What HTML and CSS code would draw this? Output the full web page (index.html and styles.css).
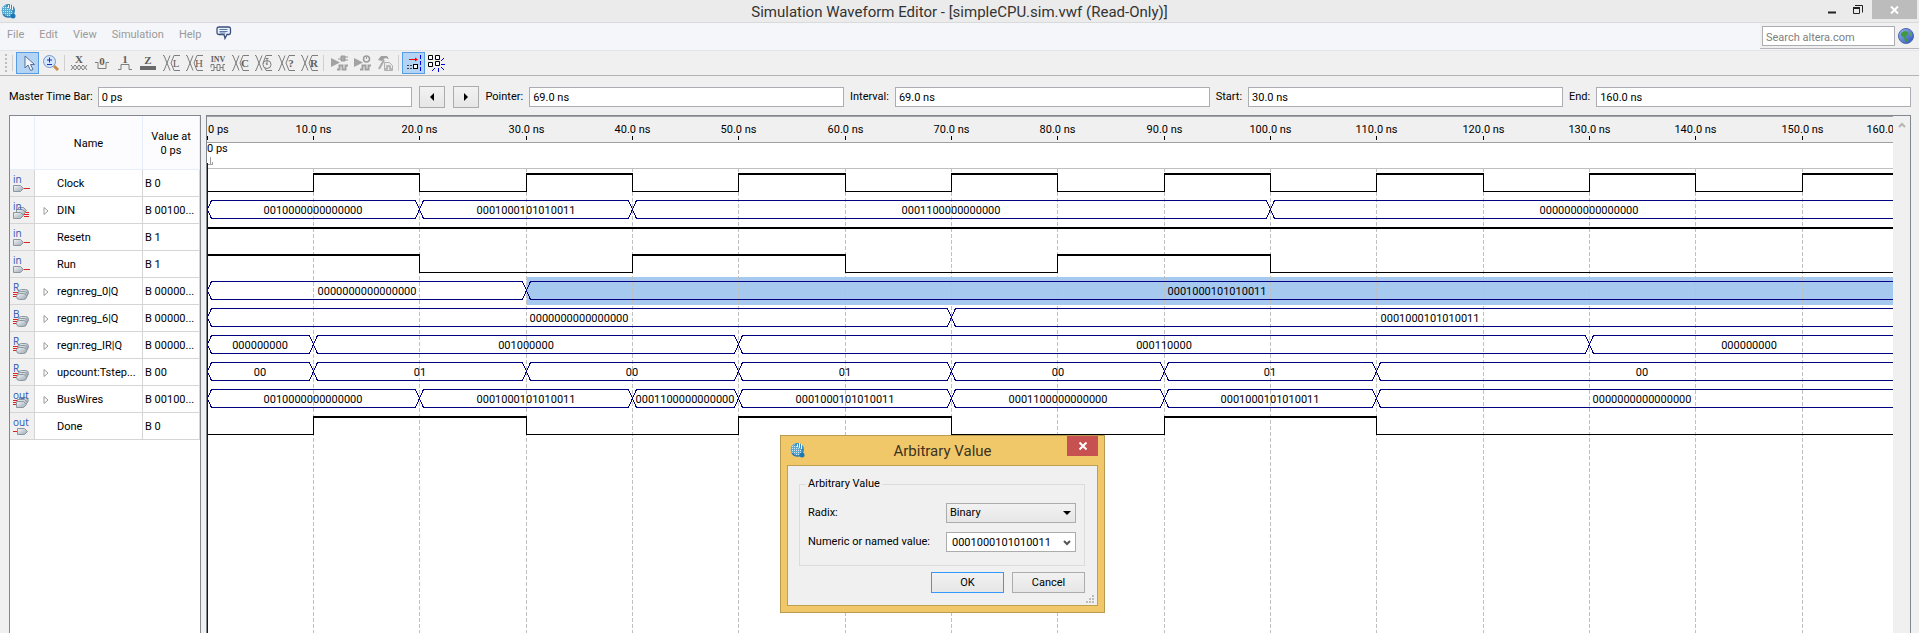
FILE: index.html
```html
<!DOCTYPE html>
<html lang="en">
<head>
<meta charset="utf-8">
<title>Simulation Waveform Editor - [simpleCPU.sim.vwf (Read-Only)]</title>
<link rel="stylesheet" href="styles.css">
</head>
<body>
<svg class="defs" aria-hidden="true">
  <defs>
    <linearGradient id="steel" x1="0" y1="0" x2="1" y2="1"><stop offset="0" stop-color="#f4f7f9"/><stop offset="1" stop-color="#9aa6b0"/></linearGradient>
    <linearGradient id="ocean" x1="0" y1="0" x2="1" y2="1"><stop offset="0" stop-color="#9db9ea"/><stop offset="1" stop-color="#2a50b8"/></linearGradient>
    <pattern id="mesh" width="2" height="2" patternUnits="userSpaceOnUse"><rect width="2" height="2" fill="#5aaad2"/><rect width="1" height="1" fill="#d4e8f2"/></pattern>
    <symbol id="app" viewBox="0 0 16 16">
      <circle cx="7" cy="7.500" r="6.500" fill="url(#mesh)"/>
      <path d="M8 1a6.500 6.500 0 0 1 6 6.500c0 2-1 4-2 4C12 7 9 4 4 3 5 2 6 1 8 1z" fill="#3a8cc0"/>
      <path d="M7.500 2v3M9.500 1v5M11.500 2v5" stroke="#eef6fa" stroke-width="1"/>
      <path d="M2 11c2 3 6 4 9 2" stroke="#2a7ab2" stroke-width="1.500" fill="none"/>
      <circle cx="12" cy="13" r="2.500" fill="#1b78b5"/>
    </symbol>
    <symbol id="pin-in" viewBox="0 0 18 18">
      <text x="0" y="8" class="pin-text">in</text>
      <path d="M11 13.500h6" stroke="#e0201c"/>
      <path d="M.5 10.500h7l3 3-3 3h-7z" fill="url(#steel)" stroke="#8a96a0"/>
    </symbol>
    <symbol id="pin-out" viewBox="0 0 18 18">
      <text x="0" y="8" class="pin-text">out</text>
      <path d="M0 13.500h5" stroke="#e0201c"/>
      <path d="M4.500 10.500h7l3 3-3 3h-7z" fill="url(#steel)" stroke="#8a96a0"/>
    </symbol>
    <symbol id="bus-in" viewBox="0 0 18 18">
      <path d="M11 10.500h5M11 12.500h5M11 14.500h5" stroke="#e0201c"/>
      <path d="M5.500 5.500h5l3 3-3 3h-5z" fill="url(#steel)" stroke="#8a96a0"/>
      <path d="M3.500 7.500h6l3 3-3 3h-6z" fill="url(#steel)" stroke="#8a96a0"/>
      <path d="M.5 10.500h7l3 3-3 3h-7z" fill="url(#steel)" stroke="#8a96a0"/>
      <text x="0" y="8" class="pin-text">in</text>
    </symbol>
    <symbol id="bus-out" viewBox="0 0 18 18">
      <path d="M0 9.500h5M0 11.500h5M0 13.500h5" stroke="#e0201c"/>
      <path d="M6.500 6.500h7l2 3-2 3h-7z" fill="url(#steel)" stroke="#8a96a0"/>
      <path d="M4.500 8.500h7l3 3-3 3h-7z" fill="url(#steel)" stroke="#8a96a0"/>
      <path d="M3.500 10.500h7l3 3-3 3h-7z" fill="url(#steel)" stroke="#8a96a0"/>
      <text x="0" y="8" class="pin-text">out</text>
    </symbol>
    <symbol id="reg" viewBox="0 0 18 18">
      <path d="M0 9.500h5M0 11.500h5M0 13.500h5" stroke="#e0201c"/>
      <rect x="5.500" y="6.500" width="10" height="6" rx="3" fill="url(#steel)" stroke="#8a96a0"/>
      <rect x="4.500" y="8.500" width="10" height="6" rx="3" fill="url(#steel)" stroke="#8a96a0"/>
      <rect x="3.500" y="10.500" width="10" height="6" rx="3" fill="url(#steel)" stroke="#8a96a0"/>
    </symbol>
    <symbol id="cross-half" viewBox="0 0 18 18"><path d="M0 1.500h1l6 15M0 16.500h1l6-15M17 1.500h-6l-3 7.500 3 7.500h6" fill="none" stroke="#7d7d7d"/></symbol>
    <symbol id="waves" viewBox="0 0 18 18"><path d="M1 4v9l9-4.500z" fill="#a3a3a3"/><path d="M7 15.500h2.500v-4h3v4h3v-4H18" fill="none" stroke="#a0a0a0" stroke-width="2"/></symbol>
  </defs>
</svg>

<header class="titlebar">
  <svg class="app-icon" width="16" height="16"><use href="#app"/></svg>
  <h1 class="title">Simulation Waveform Editor - [simpleCPU.sim.vwf (Read-Only)]</h1>
  <div class="window-buttons">
    <button class="win-btn" aria-label="Minimize"><svg width="10" height="16"><path d="M1 11.500h8" stroke="#222" stroke-width="2"/></svg></button>
    <button class="win-btn" aria-label="Restore"><svg width="12" height="16"><path d="M3 4.500h7.500v7" fill="none" stroke="#222"/><path d="M1.500 6.500h6v6h-6z" fill="none" stroke="#222"/><path d="M1 7h7" stroke="#222" stroke-width="2"/></svg></button>
    <button class="win-btn win-close" aria-label="Close"><svg width="9" height="8"><path d="M1 .5l7 7M8 .5l-7 7" stroke="#fff" stroke-width="2"/></svg></button>
  </div>
</header>

<div class="menubar">
  <nav class="menu" aria-label="Main menu">
    <a href="#file">File</a><a href="#edit">Edit</a><a href="#view">View</a><a href="#simulation">Simulation</a><a href="#help">Help</a>
    <button class="feedback" aria-label="Feedback"><svg width="15" height="14"><path d="M3 1h10q1.500 0 1.500 2v3.500q0 2-1.500 2h-2L9 12.500l-1-4H3Q1 8.500 1 6.500V3q0-2 2-2z" fill="#e9f0fa" stroke="#3a5078" stroke-width="1.300"/><path d="M3.500 3.500h8M3.500 5.500h8M3.500 7h6" stroke="#5a78a8"/></svg></button>
  </nav>
  <form class="search">
    <input class="search-box" type="search" aria-label="Search altera.com" placeholder="Search altera.com">
    <button class="globe" type="button" aria-label="Go"><svg width="16" height="16"><circle cx="8" cy="8" r="7.500" fill="url(#ocean)" stroke="#4a68b0"/><path d="M3 5l4-2 3 1v3l-2 1v2l2 1-1 3-2-1-1-4-3-1z" fill="#3f9b3d"/><path d="M11 3l3 3v3l-2-2z" fill="#5aa650"/></svg></button>
  </form>
</div>

<div class="toolbar" role="toolbar" aria-label="Waveform tools">
  <svg class="grip" width="4" height="20"><path d="M2 1v18" stroke="#bdbdbd" stroke-width="2" stroke-dasharray="2 2"/></svg>
  <span class="sep"></span>
  <button class="tool active" aria-label="Selection tool"><svg width="18" height="18"><path d="M6 2v12l3-3 2.500 5.500 2.500-1-2.500-5h4z" fill="#f2f6fb" stroke="#5b6f96"/></svg></button>
  <button class="tool" aria-label="Zoom tool"><svg width="18" height="18"><path d="M12 12l4 4" stroke="#c98b48" stroke-width="3"/><circle cx="7.500" cy="7.500" r="6" fill="#d3e6fb" stroke="#7898c8"/><path d="M5 6h5M7.500 3.500v5M5 10.500h5" stroke="#1c2fae"/></svg></button>
  <span class="sep"></span>
  <button class="tool" aria-label="Forcing unknown"><svg width="18" height="18"><text x="8" y="9" class="glyph">X</text><path d="M0 11l4 5 4-5 4 5 4-5M0 16l4-5 4 5 4-5 4 5" fill="none" stroke="#7d7d7d"/></svg></button>
  <button class="tool" aria-label="Forcing low"><svg width="18" height="18"><text x="8" y="11" class="glyph">0</text><path d="M1 8.500h3v6h8v-6h3" fill="none" stroke="#7d7d7d"/></svg></button>
  <button class="tool" aria-label="Forcing high"><svg width="18" height="18"><text x="8" y="9" class="glyph">1</text><path d="M1 15.500h3v-5h8v5h3" fill="none" stroke="#7d7d7d"/></svg></button>
  <button class="tool" aria-label="High impedance"><svg width="18" height="18"><text x="8" y="10" class="glyph">Z</text><path d="M0 14h16" stroke="#6a6a6a" stroke-width="4"/></svg></button>
  <button class="tool" aria-label="Weak low"><svg width="18" height="18"><use href="#cross-half"/><text x="13" y="13" class="glyph thin">L</text></svg></button>
  <button class="tool" aria-label="Weak high"><svg width="18" height="18"><use href="#cross-half"/><text x="13" y="13" class="glyph thin">H</text></svg></button>
  <button class="tool" aria-label="Invert"><svg width="18" height="18"><text x="9" y="8" class="glyph small">INV</text><path d="M2 13.500V10.500h3v3h3v-3h3v3h3v-3h2M2 16.500h3v-3M8 13.500v3h3v-3M14 13v3.500h2" fill="none" stroke="#7d7d7d"/></svg></button>
  <button class="tool" aria-label="Count value"><svg width="18" height="18"><use href="#cross-half"/><text x="13" y="13" class="glyph">C</text></svg></button>
  <button class="tool" aria-label="Overwrite clock"><svg width="18" height="18"><use href="#cross-half"/><circle cx="12" cy="10.500" r="4" fill="#f0f0f0" stroke="#7d7d7d"/><path d="M12 7v4M10.500 4.500h3M12 4v2M11 9l1 2" fill="none" stroke="#7d7d7d"/></svg></button>
  <button class="tool" aria-label="Arbitrary value"><svg width="18" height="18"><use href="#cross-half"/><text x="13" y="13" class="glyph">?</text></svg></button>
  <button class="tool" aria-label="Random values"><svg width="18" height="18"><use href="#cross-half"/><text x="13" y="13" class="glyph">R</text></svg></button>
  <span class="sep"></span>
  <button class="tool" aria-label="Run functional simulation"><svg width="18" height="18"><use href="#waves"/><path d="M8 5h3M11 2h4v5h-4zM15 3h3M15 6h3" fill="#aaa" stroke="#9b9b9b"/></svg></button>
  <button class="tool" aria-label="Run timing simulation"><svg width="18" height="18"><use href="#waves"/><circle cx="13.500" cy="5" r="3" fill="#eee" stroke="#9b9b9b" stroke-width="1.500"/><path d="M13.500 3v2" stroke="#9b9b9b"/></svg></button>
  <button class="tool" aria-label="Generate testbench"><svg width="18" height="18"><path d="M3 15l5-9" stroke="#aaa" stroke-width="2"/><path d="M2 6l3-4h6l2 3-4-1-3 3z" fill="#a0a0a0"/><path d="M8.500 8.500h5l3 3v5h-8z" fill="#ececec" stroke="#b0b0b0"/><path d="M9 15h2v-3h3v3h2" fill="none" stroke="#a8a8a8" stroke-width="1.500"/></svg></button>
  <span class="sep"></span>
  <button class="tool active" aria-label="Snap to grid"><svg width="18" height="18"><path d="M4 5.500h8" stroke="#f00"/><path d="M10 3.500l3 2-3 2z" fill="#f00"/><path d="M2 11.500h7M2 14.500h7" stroke="#444" stroke-dasharray="2 1"/><rect x="8.500" y="10.500" width="4" height="4" fill="#fff" stroke="#000"/><path d="M15.500 1v16" stroke="#0000e0" stroke-dasharray="4 2"/></svg></button>
  <button class="tool" aria-label="Snap to transition"><svg width="18" height="18"><path d="M.5 1.500h4v4h-4zM7.500 1.500h4v4h-4zM.5 8.500h4v4h-4z" fill="#fff" stroke="#000"/><path d="M7.500 7.500h4v4h-4z" fill="#fff" stroke="#000"/><path d="M13 7l3-3M13 10.500h4M13 13l3 3M10.500 14v4M7 14l-3 3" stroke="#0000e0"/></svg></button>
</div>

<form class="timebar">
  <label class="field field-master"><span>Master Time Bar:</span><input value="0 ps"></label>
  <button class="step step-first" type="button" aria-label="Previous transition"><svg width="6" height="8"><path d="M5 0v8L1 4z"/></svg></button>
  <button class="step" type="button" aria-label="Next transition"><svg width="6" height="8"><path d="M1 0v8l4-4z"/></svg></button>
  <label class="field"><span>Pointer:</span><input value="69.0 ns"></label>
  <label class="field"><span>Interval:</span><input value="69.0 ns"></label>
  <label class="field"><span>Start:</span><input value="30.0 ns"></label>
  <label class="field"><span>End:</span><input value="160.0 ns"></label>
</form>

<main class="editor">
  <section class="names" aria-label="Signals">
    <table class="signals">
      <thead><tr><th class="col-icon"></th><th class="col-name">Name</th><th class="col-value">Value at<br>0 ps</th></tr></thead>
      <tbody id="signal-rows"></tbody>
    </table>
  </section>
  <section class="waves" aria-label="Waveforms">
    <div class="wave-area">
      <svg class="ruler" id="ruler" height="52"></svg>
      <svg class="plot" id="plot"></svg>
    </div>
    <div class="scroll-track"><svg width="8" height="6"><path d="M1 5l3-3 3 3" fill="none" stroke="#b5b5b5" stroke-width="2"/></svg></div>
  </section>
</main>

<div class="dialog" role="dialog" aria-labelledby="dialog-title">
  <div class="dialog-head">
    <svg class="dialog-icon" width="16" height="16"><use href="#app"/></svg>
    <h2 class="dialog-title" id="dialog-title">Arbitrary Value</h2>
    <button class="dialog-close" aria-label="Close dialog"><svg width="8" height="8"><path d="M.5 .5l7 7M7.500 .5l-7 7" stroke="#fff" stroke-width="2"/></svg></button>
  </div>
  <form class="dialog-body">
    <fieldset class="group">
      <legend>Arbitrary Value</legend>
      <label for="radix">Radix:</label>
      <div class="combo">
        <select id="radix" class="combo-select"><option>Binary</option></select>
        <svg class="combo-arrow" width="8" height="4"><path d="M0 0h8L4 4z"/></svg>
      </div>
      <label for="value">Numeric or named value:</label>
      <div class="combo">
        <input id="value" class="combo-input" value="0001000101010011">
        <svg class="combo-arrow" width="8" height="6"><path d="M1 1l3 3 3-3" fill="none" stroke="#555" stroke-width="2"/></svg>
      </div>
    </fieldset>
    <div class="actions">
      <button class="btn btn-default" type="button">OK</button>
      <button class="btn" type="button">Cancel</button>
    </div>
    <svg class="size-grip" width="8" height="8"><path d="M6 0h2v2H6zM3 3h2v2H3zM6 3h2v2H6zM0 6h2v2H0zM3 6h2v2H3zM6 6h2v2H6z" fill="#bdbdbd"/></svg>
  </form>
</div>
<script src="waves.js"></script>
</body>
</html>
```
FILE: styles.css
```css
* { box-sizing: border-box; }
body {
  margin: 0;
  height: 100vh;
  display: flex;
  flex-direction: column;
  overflow: hidden;
  background: #f0f0f0;
  color: #000;
  font: 11px/14px Roboto, "Noto Sans", sans-serif;
}
button, input, select { font: inherit; color: inherit; margin: 0; border-radius: 0; }
button { padding: 0; border: 0; background: none; display: flex; align-items: center; justify-content: center; }
svg { display: block; overflow: visible; }
symbol { overflow: visible; }
.defs { position: absolute; width: 0; height: 0; }

.titlebar { display: grid; grid-template-columns: 1fr auto 1fr; flex: none; height: 23px; background: #ebebeb; border-bottom: 1px solid #d9dadb; }
.app-icon { margin: 3px 0 0 1px; }
.title { margin: 0; font-size: 15px; line-height: 24px; font-weight: 400; color: #333; }
.window-buttons { display: flex; justify-content: flex-end; align-items: flex-start; padding-right: 2px; }
.win-btn { width: 26px; height: 18px; }
.win-close { width: 45px; height: 19px; margin-left: 1px; background: #bcbcbc; }

.menubar { display: flex; justify-content: space-between; flex: none; height: 28px; background: #f5f6f9; border-bottom: 1px solid #e3e4e6; }
.menu { display: flex; align-items: flex-start; gap: 15px; padding: 3px 7px; }
.menu a { color: #9a9a9a; text-decoration: none; line-height: 15px; padding-top: 1px; }
.search { display: flex; align-items: flex-start; gap: 3px; height: 26px; padding: 3px 5px 0 2px; border-bottom: 1px solid #b5b5b5; background: #f0f0f0; }
.search-box { width: 133px; height: 20px; padding: 2px 3px 0; border: 1px solid #abadb3; background: #fff; appearance: none; outline: 0; }
.search-box::placeholder { color: #808080; opacity: 1; }
.globe { height: 20px; }

.toolbar { display: flex; align-items: center; flex: none; height: 25px; padding: 0 4px 1px; border-bottom: 1px solid #b4b4b4; }
.grip { margin-right: 3px; }
.sep { width: 1px; height: 16px; margin: 0 3px 0 2px; background: #cfcfcf; }
.grip + .sep { margin-left: 1px; }
.tool { width: 23px; height: 22px; }
.tool.active { background: #b3d4f4; border: 1px solid #569de5; }
.glyph { font: bold 11px "Liberation Serif", serif; fill: #5f5f5f; text-anchor: middle; }
.glyph.thin { font-weight: 400; }
.glyph.small { font-size: 8px; }
.pin-text { font: 10px "Open Sans", sans-serif; fill: #2f55b0; }

.timebar { display: flex; flex: none; align-items: center; gap: 6px; height: 39px; padding: 2px 8px 0 9px; }
.field { flex: 1 0 auto; display: flex; align-items: center; gap: 6px; }
.field input { flex: 1; min-width: 0; height: 20px; padding: 1px 3px 0; border: 1px solid #abadb3; background: #fff; outline: 0; }
.field-master { gap: 5px; padding-right: 1px; }
.step { width: 26px; height: 22px; border: 1px solid #acacac; background: linear-gradient(#f2f2f2, #e6e6e6); }
.step + .step { margin-left: 2px; }

.editor { flex: 1; min-height: 0; display: flex; gap: 5px; padding: 0 8px 0 9px; }
.names { flex: none; width: 192px; background: #fff; border: 1px solid #828790; border-bottom: 0; overflow: hidden; }
.signals { width: 190px; table-layout: fixed; border-collapse: separate; border-spacing: 0; }
.signals th { height: 54px; padding: 2px 0 0; font-weight: 400; background: #fcfcfe; border: solid #e5effb; border-width: 0 1px 1px 0; }
.col-icon { width: 25px; }
.col-name { width: 108px; }
.col-value { width: 57px; }
.signals td { height: 27px; padding: 2px 2px 0; border: solid #d5d5d5; border-width: 0 1px 1px 0; white-space: nowrap; }
.signals .cell-icon { padding-left: 3px; background: #f0f0f0; }
.signal { display: flex; align-items: center; gap: 8px; padding-left: 6px; }
.expander { flex: none; width: 6px; height: 8px; }

.waves { flex: 1; min-width: 0; display: flex; border: 1px solid #828790; border-bottom: 0; }
.wave-area { flex: 1; min-width: 0; display: flex; flex-direction: column; background: #fff; overflow: hidden; }
.ruler { flex: none; width: 100%; }
.plot { flex: 1; width: 100%; min-height: 0; }
.scroll-track { flex: none; width: 17px; padding: 6px 0 0 5px; background: #f0f0f0; }
.wave-text { fill: #000; text-anchor: middle; }
.line { fill: none; shape-rendering: crispEdges; stroke: #000; }
.bus { stroke: #000080; }
.grid { stroke: #c0c0c0; stroke-dasharray: 4 2; }
.master { stroke: #0000c8; }

.dialog { position: absolute; left: 780px; top: 435px; width: 325px; padding: 0 6px 6px; background: #f0c869; border: 1px solid #b89a50; }
.dialog-head { display: grid; grid-template-columns: 1fr auto 1fr; height: 29px; }
.dialog-icon { margin: 6px 0 0 3px; }
.dialog-title { margin: 0; padding-top: 5px; font-size: 15px; line-height: 20px; font-weight: 400; color: #3c3320; }
.dialog-close { justify-self: end; width: 31px; height: 20px; background: #c75050; }
.dialog-body { position: relative; display: flex; flex-direction: column; gap: 6px; padding: 11px 12px 12px 11px; border: 1px solid #c0a050; background: #f0f0f0; }
.group { display: grid; grid-template-columns: 1fr 130px; align-items: center; row-gap: 9px; margin: 0; padding: 12px 8px 13px 8px; border: 1px solid #dcdcdc; }
.group legend { padding: 0 2px; margin-left: -2px; }
.combo { position: relative; }
.combo-select, .combo-input { display: block; width: 100%; height: 20px; border: 1px solid #acacac; outline: 0; appearance: none; }
.combo-select { padding: 0 3px; background: linear-gradient(#f2f2f2, #e6e6e6); }
.combo-input { padding: 1px 5px 0; background: #fff; }
.combo-arrow { position: absolute; right: 5px; top: 8px; pointer-events: none; }
.actions { display: flex; justify-content: flex-end; gap: 8px; }
.btn { width: 73px; height: 21px; border: 1px solid #acacac; background: linear-gradient(#f2f2f2, #e6e6e6); }
.btn-default { border-color: #3399ff; }
.size-grip { position: absolute; right: 3px; bottom: 2px; }
```
FILE: waves.js
```javascript
const PX_PER_NS = 10.635;
const ROW = 27;
const END = 160;
const VALUE_CHARS = 5;

const signals = [
  { name: "Clock", value: "0", icon: "pin-in", level: [0, 1, 0, 1, 0, 1, 0, 1, 0, 1, 0, 1, 0, 1, 0, 1].map((v, i) => [i * 10, v]) },
  { name: "DIN", value: "0010000000000000", icon: "bus-in", bus: [[0, "0010000000000000"], [20, "0001000101010011"], [40, "0001100000000000"], [100, "0000000000000000"]] },
  { name: "Resetn", value: "1", icon: "pin-in", level: [[0, 1]] },
  { name: "Run", value: "1", icon: "pin-in", level: [[0, 1], [20, 0], [40, 1], [60, 0], [80, 1], [100, 0]] },
  { name: "regn:reg_0|Q", value: "0000000000000000", icon: "reg", letter: "R", selected: 30, bus: [[0, "0000000000000000"], [30, "0001000101010011"]] },
  { name: "regn:reg_6|Q", value: "0000000000000000", icon: "reg", letter: "B", bus: [[0, "0000000000000000"], [70, "0001000101010011"]] },
  { name: "regn:reg_IR|Q", value: "000000000", icon: "reg", letter: "R", bus: [[0, "000000000"], [10, "001000000"], [50, "000110000"], [130, "000000000"]] },
  { name: "upcount:Tstep...", value: "00", icon: "reg", letter: "R", bus: [[0, "00"], [10, "01"], [30, "00"], [50, "01"], [70, "00"], [90, "01"], [110, "00"]] },
  { name: "BusWires", value: "0010000000000000", icon: "bus-out", bus: [[0, "0010000000000000"], [20, "0001000101010011"], [40, "0001100000000000"], [50, "0001000101010011"], [70, "0001100000000000"], [90, "0001000101010011"], [110, "0000000000000000"]] },
  { name: "Done", value: "0", icon: "pin-out", level: [[0, 0], [10, 1], [30, 0], [50, 1], [70, 0], [90, 1], [110, 0]] }
];

const px = ns => Math.floor(ns * PX_PER_NS) + 0.5;
const shorten = v => v.length > VALUE_CHARS ? v.slice(0, VALUE_CHARS) + "..." : v;

/* Signal list */
document.getElementById("signal-rows").innerHTML = signals.map(s => {
  const letter = s.letter ? `<text x="0" y="8" class="pin-text">${s.letter}</text>` : "";
  const arrow = s.bus ? '<path d="M1 .5v7l4-3.500z" fill="none" stroke="#9a9a9a"/>' : "";
  return `<tr><td class="cell-icon"><svg width="18" height="18"><use href="#${s.icon}"/>${letter}</svg></td>
    <td><div class="signal"><svg class="expander">${arrow}</svg><span>${s.name}</span></div></td>
    <td>B ${shorten(s.value)}</td></tr>`;
}).join("");

/* Time ruler */
let ruler = '<rect width="100%" height="26" fill="#f0f0f0"/><path class="line" d="M0 .5h4000M0 26.500h4000" style="stroke:#a0a0a0"/>';
for (let t = 0; t <= END; t += 10) {
  const label = t ? t.toFixed(1) + " ns" : "0 ps";
  const x = t === 0 ? 1 : px(t);
  const anchor = t === 0 ? "start" : t === END ? "end" : "middle";
  ruler += `<text x="${x}" y="17" text-anchor="${anchor}">${label}</text><path class="line" d="M${px(t)} 20v4"/>`;
}
ruler += '<text x="0" y="36">0 ps</text><path class="line" d="M1 48.500h4v-3M3.500 48v-7" style="stroke:#a0a0a0"/><path class="line master" d="M.5 47v6"/>';
document.getElementById("ruler").innerHTML = ruler;

/* Waveforms */
let plot = "";
signals.forEach((s, i) => {
  if (s.selected) plot += `<rect x="${px(s.selected)}" y="${i * ROW + 1}" width="4000" height="28" fill="#a6c9f0"/>`;
});
for (let t = 10; t < END; t += 10) plot += `<path class="line grid" d="M${px(t)} 0v2000"/>`;
signals.forEach((s, i) => {
  const top = i * ROW + 5.5, bottom = top + 18;
  const steps = s.level || s.bus;
  steps.forEach(([t, v], k) => {
    const last = k === steps.length - 1;
    const a = px(t), b = px(last ? END : steps[k + 1][0]);
    if (s.level) {
      const y = v ? top + 0.5 : bottom;
      plot += `<path class="line" d="M${a - 0.5} ${y}H${b + 0.5}" stroke-width="${v ? 2 : 1}"/>`;
      if (k) plot += `<path class="line" d="M${a} ${top}V${bottom}"/>`;
    } else {
      const mid = (top + bottom) / 2;
      plot += `<path class="line bus" d="M${b} ${mid}L${b - 4} ${top}H${a + 4}L${a} ${mid}L${a + 4} ${bottom}H${b - 4}z"/>`;
      plot += `<text class="wave-text" x="${Math.floor((a + b) / 2)}" y="${top + 13.5}">${v}</text>`;
    }
  });
});
plot += '<path class="line" d="M0 .5h4000" style="stroke:#c0c0c0"/><path class="line master" d="M.5 0v2000"/>';
document.getElementById("plot").innerHTML = plot;
```
